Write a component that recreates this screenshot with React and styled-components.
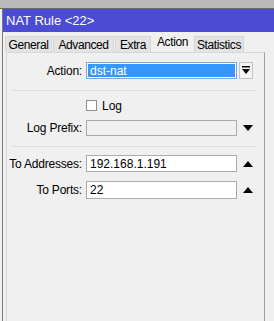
import React from 'react'
import styled, { createGlobalStyle } from 'styled-components'

const Global = createGlobalStyle`
  body {
    margin: 0;
    background: #f0f0f0;
    font-family: "Liberation Sans", Arial, sans-serif;
    font-size: 12px;
    color: #000;
  }
`

const Frame = styled.div`
  width: 274px;
  height: 321px;
  display: flex;
  flex-direction: column;
  overflow: hidden;
  background: #f0f0f0;
`

const TopStrip = styled.div`
  height: 8px;
  background: #b9b9b9;
  border-bottom: 1px solid #6a6a6a;
`

const Window = styled.div`
  flex: 1;
  display: flex;
  flex-direction: column;
  margin-left: 2px;
  border-left: 1px solid #7a7a7a;
`

const TitleBar = styled.div`
  height: 23px;
  background: #4b4bd4;
  color: #fff;
  font-size: 13px;
  display: flex;
  align-items: center;
  padding-left: 3px;
`

const TabRow = styled.div`
  display: flex;
  align-items: flex-end;
  height: 20px;
  padding-left: 2px;
`

const Tab = styled.div`
  width: ${p => p.w}px;
  height: ${p => (p.active ? 19 : 16)}px;
  display: flex;
  align-items: center;
  justify-content: center;
  white-space: nowrap;
  background: ${p => (p.active ? '#f0f0f0' : '#e3e3e3')};
  border: 1px solid ${p => (p.active ? 'transparent' : '#d6d6d6')};
  border-bottom: none;
  margin-right: 1px;
  font-size: 12px;
  letter-spacing: -0.4px;
  box-sizing: border-box;
  padding-bottom: ${p => (p.active ? 3 : 0)}px;
`

const Panel = styled.div`
  flex: 1;
  margin-left: 3px;
  width: 259px;
  border-left: 1px solid #d8d8d8;
  border-right: 1px solid #a0a0a0;
  border-top: 1px solid #d8d8d8;
  box-sizing: border-box;
  display: flex;
  flex-direction: column;
  padding-top: 9px;
`

const Row = styled.div`
  display: flex;
  align-items: center;
  height: ${p => p.h || 17}px;
  margin-bottom: ${p => p.mb || 0}px;
  white-space: nowrap;
`

const Label = styled.div`
  width: 75px;
  text-align: right;
  padding-right: 4px;
  flex: none;
  white-space: nowrap;
  letter-spacing: -0.2px;
`

const Field = styled.div`
  width: 151px;
  height: ${p => p.h || 17}px;
  box-sizing: border-box;
  border: 1px solid ${p => (p.selected ? '#7aa7d8' : '#ababab')};
  background: ${p => (p.disabled ? '#f0f0f0' : '#fff')};
  display: flex;
  align-items: center;
  padding: ${p => (p.selected ? '1px' : '0 3px')};
`

const Highlight = styled.div`
  flex: 1;
  align-self: stretch;
  background: #3399ff;
  color: #fff;
  padding-left: 2px;
  display: flex;
  align-items: center;
`

const DropButton = styled.div`
  width: 14px;
  height: 17px;
  margin-left: 2px;
  box-sizing: border-box;
  border: 1px solid #c4c4c4;
  background: #f4f4f4;
  display: flex;
  align-items: center;
  justify-content: center;
`

const ArrowSlot = styled.div`
  width: 14px;
  margin-left: 4px;
  display: flex;
  align-items: center;
  justify-content: center;
`

const Separator = styled.div`
  height: 1px;
  flex: none;
  background: #dcdcdc;
  margin: ${p => p.m};
`

const Check = styled.div`
  width: 11px;
  height: 11px;
  border: 1px solid #8f8f8f;
  background: #fff;
  margin-right: 5px;
  box-sizing: border-box;
`

const DownBar = () => (
  <svg width="8" height="9" viewBox="0 0 8 9">
    <rect x="0" y="0" width="8" height="1.5" fill="#000" />
    <polygon points="0,3 8,3 4,8" fill="#000" />
  </svg>
)

const Tri = ({ up }) => (
  <svg width="10" height="6" viewBox="0 0 10 6">
    <polygon points={up ? '0,6 10,6 5,0' : '0,0 10,0 5,6'} fill="#000" />
  </svg>
)

export default function App() {
  return (
    <>
      <Global />
      <Frame>
        <TopStrip />
        <Window>
          <TitleBar>NAT Rule &lt;22&gt;</TitleBar>
          <TabRow>
            <Tab w={47}>General</Tab>
            <Tab w={61}>Advanced</Tab>
            <Tab w={36}>Extra</Tab>
            <Tab w={41} active>Action</Tab>
            <Tab w={50}>Statistics</Tab>
          </TabRow>
          <Panel>
            <Row>
              <Label>Action:</Label>
              <Field selected>
                <Highlight>dst-nat</Highlight>
              </Field>
              <DropButton>
                <DownBar />
              </DropButton>
            </Row>
            <Separator m="11px 7px 9px 5px" />
            <Row h={11} mb={9}>
              <Label />
              <Check />
              Log
            </Row>
            <Row h={16}>
              <Label>Log Prefix:</Label>
              <Field disabled h={16} />
              <ArrowSlot>
                <Tri />
              </ArrowSlot>
            </Row>
            <Separator m="10px 7px 8px 5px" />
            <Row mb={9}>
              <Label>To Addresses:</Label>
              <Field>192.168.1.191</Field>
              <ArrowSlot>
                <Tri up />
              </ArrowSlot>
            </Row>
            <Row h={18}>
              <Label>To Ports:</Label>
              <Field h={18}>22</Field>
              <ArrowSlot>
                <Tri up />
              </ArrowSlot>
            </Row>
          </Panel>
        </Window>
      </Frame>
    </>
  )
}
